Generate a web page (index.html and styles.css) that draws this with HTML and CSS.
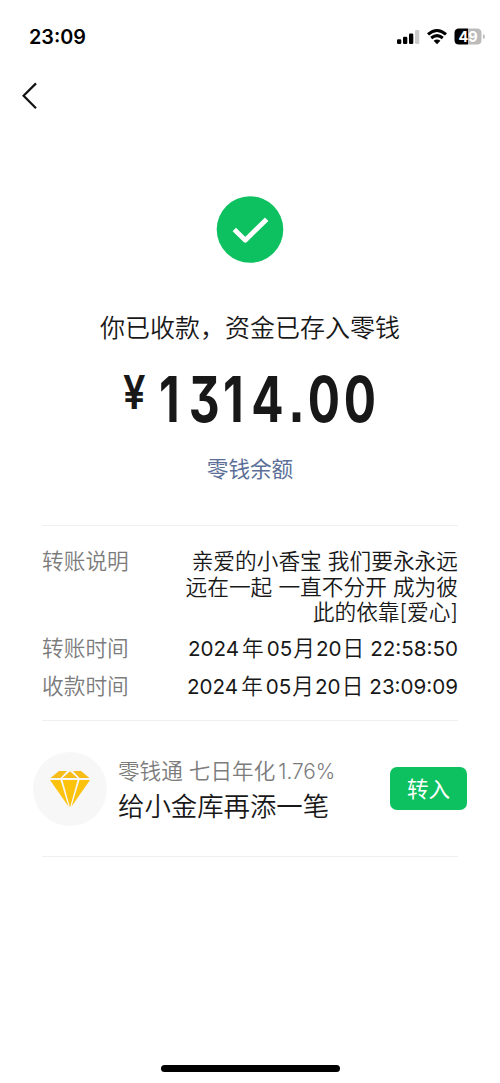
FILE: index.html
```html
<!DOCTYPE html>
<html lang="zh-CN">
<head>
<meta charset="utf-8">
<title>转账详情</title>
<link rel="stylesheet" href="styles.css">
</head>
<body>
<div class="screen">
  <header class="status">
    <span class="clock">23:09</span>
    <svg class="indicators" width="92" height="24" viewBox="0 0 92 24">
      <rect x="1" y="14.300" width="4.300" height="4.700" rx="1.2"/>
      <rect x="7" y="11.7" width="4.300" height="7.3" rx="1.2"/>
      <rect x="13" y="8.500" width="4.300" height="10.5" rx="1.2"/>
      <rect x="19" y="5" width="4.300" height="14" rx="1.2" fill="#ccc"/>
      <path d="M32 9.4Q41 1.5 50 9.4M35.200 13Q41 8.200 46.800 13" fill="none" stroke="#000" stroke-width="3"/>
      <path d="M37.600 15.800Q41 13 44.400 15.800L41 19.200Z"/>
      <path d="M63 3.500h9v16h-9q-4.500 0-4.500-4.500v-7q0-4.500 4.500-4.500z"/>
      <path d="M72 3.500h9q4.500 0 4.500 4.500v7q0 4.500-4.500 4.500h-9z" fill="#bbb"/>
      <path d="M87 9q2 .5 2 2.500t-2 2.500z" fill="#bbb"/>
      <text class="battery-level" x="72" y="16.700" text-anchor="middle">49</text>
    </svg>
  </header>
  <nav class="nav">
    <svg width="18" height="30" viewBox="0 0 18 30"><path d="M15 3.400 2.600 15.800l12.400 12.400" fill="none" stroke="#111" stroke-width="2.200"/></svg>
  </nav>
  <main>
    <section class="result">
      <svg class="check" width="68" height="68" viewBox="0 0 68 68"><circle cx="34" cy="34.500" r="33.300" fill="#0dc160"/><path d="M18.300 34.500 29.300 45.200 50.700 24.200" fill="none" stroke="#fff" stroke-width="4.800" stroke-linejoin="round"/></svg>
      <h1 class="title">你已收款，资金已存入零钱</h1>
      <svg class="amount" width="260" height="76" viewBox="0 0 260 76">
        <text class="yen" transform="translate(3 52) scale(.87 1)">¥</text>
        <text class="digits" transform="translate(37 65) scale(.76 1)" x="2.500 41.700 87 124 173 198.500 245.800">1314.00</text>
      </svg>
      <a class="balance">零钱余额</a>
    </section>
    <dl class="details">
      <div class="row note"><dt>转账说明</dt><dd>亲爱的小香宝 我们要永永远<br>远在一起 一直不分开 成为彼<br>此的依靠[爱心]</dd></div>
      <div class="row"><dt>转账时间</dt><dd><span class="num">2024</span>年<span class="num month">05</span>月<span class="num day">20</span>日<span class="time">22:58:50</span></dd></div>
      <div class="row"><dt>收款时间</dt><dd><span class="num">2024</span>年<span class="num month">05</span>月<span class="num day">20</span>日<span class="time">23:09:09</span></dd></div>
    </dl>
    <section class="promo">
      <span class="badge"><svg width="42" height="40" viewBox="0 0 42 40" fill="#fcc20c">
        <path d="M10 2h8l-6.500 7H1.500zM21 2.200 28.500 9h-15zM24 2h8l8.500 7h-10z" fill="#f6bd18"/>
        <path d="M1 11h10.500l8 26.500zM13.500 11h15L21 38.500zM30.500 11H41L22.500 37.500z"/>
      </svg></span>
      <div class="copy"><p class="rate">零钱通 七日年化<span>1.76%</span></p><p class="headline">给小金库再添一笔</p></div>
      <button class="transfer">转入</button>
    </section>
    <hr class="divider">
  </main>
  <footer class="home"><span></span></footer>
</div>
</body>
</html>
```
FILE: styles.css
```css
* { box-sizing: border-box; }
body { margin: 0; background: #fff; }
p, h1, dl, dd { margin: 0; }
svg { display: block; }

.screen {
  width: 500px;
  height: 1083px;
  display: flex;
  flex-direction: column;
  background: #fff;
  color: #181818;
  font-family: Inter, "Noto Sans CJK SC", sans-serif;
  font-weight: 350;
  white-space: nowrap;
}

.status {
  height: 74px;
  padding: 0 12px 0 29px;
  display: flex;
  align-items: center;
  justify-content: space-between;
}
.clock { font-size: 19.800px; font-weight: 600; color: #000; }
.battery-level { font-size: 14.500px; font-weight: 700; fill: #fff; }

.nav { height: 44px; padding: 6px 0 0 21px; }

.result {
  height: 407px;
  padding-top: 77px;
  display: flex;
  flex-direction: column;
  align-items: center;
}
.title {
  margin-top: 46px;
  line-height: 38px;
  font-size: 25px;
  font-weight: 350;
}
.amount { margin-top: 10px; overflow: visible; }
.yen { font-size: 46px; font-weight: 600; fill: #181818; }
.digits {
  font-size: 63px;
  font-weight: 700;
  fill: #181818;
  font-feature-settings: "cv09" 1, "ss07" 1;
}
.balance {
  margin-top: 19px;
  line-height: 34px;
  font-size: 21.6px;
  font-weight: 400;
  color: #5c6f98;
}

.details {
  margin: 0 42px;
  height: 196px;
  padding-top: 23px;
  border-top: 1px solid #f0f0f0;
  border-bottom: 1px solid #f0f0f0;
  font-size: 21.700px;
}
.row { display: flex; justify-content: space-between; line-height: 37.500px; }
.row dt { color: #7c7c7c; }
.note { height: 81px; line-height: 25.500px; text-align: right; }
.num { margin-right: 3px; }
.month { margin-left: 3px; margin-right: 1px; }
.day { margin-left: 1px; margin-right: 1px; }
.num, .time { font-size: 20.600px; font-weight: 400; }
.time { margin-left: 6px; }

.promo {
  height: 135px;
  margin: 0 33px;
  display: flex;
  align-items: center;
}
.badge {
  width: 74px;
  height: 74px;
  border-radius: 50%;
  background: #f7f7f7;
  display: grid;
  place-items: center;
}
.copy { margin-left: 11px; padding-bottom: 1px; }
.rate { font-size: 21.600px; line-height: 34px; color: #7c7c7c; }
.rate span { font-size: 20.800px; margin-left: 3px; }
.headline { font-size: 26.400px; line-height: 34px; }
.transfer {
  margin-left: auto;
  width: 77px;
  height: 43px;
  padding: 0 0 3px;
  border: 0;
  border-radius: 7px;
  background: #0dc160;
  color: #fff;
  font: 400 21.500px "Noto Sans CJK SC", sans-serif;
}
.divider { margin: 0 42px; border: 0; border-top: 1px solid #f0f0f0; }

.home { margin-top: auto; padding-bottom: 11px; display: flex; justify-content: center; }
.home span { width: 179px; height: 7px; border-radius: 4px; background: #000; }
```
